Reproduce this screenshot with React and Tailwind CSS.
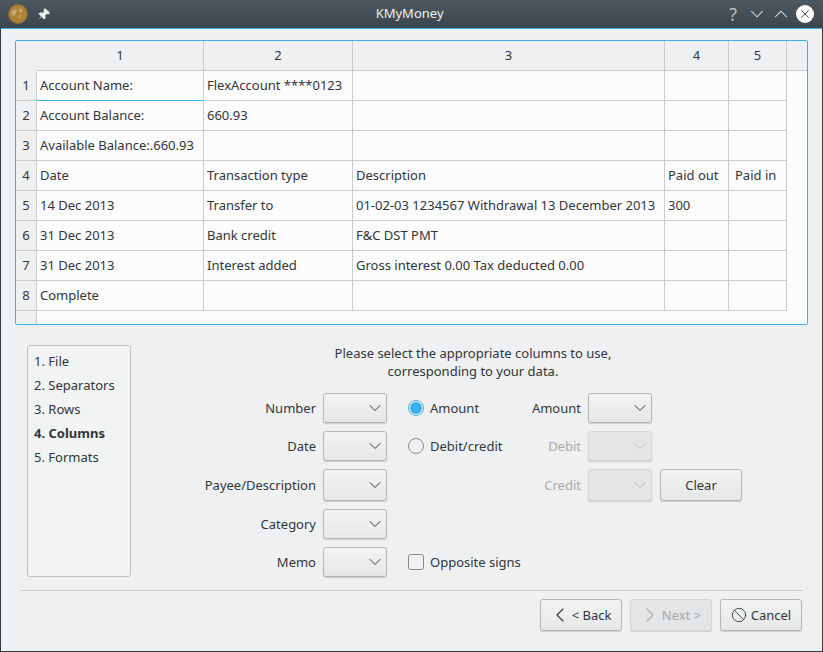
import React from 'react'
import { ChevronDown, ChevronUp, ChevronLeft, ChevronRight, Pin, Ban, X } from 'lucide-react'

const colWidths = ['w-[167px]', 'w-[149px]', 'w-[312px]', 'w-[64px]', 'w-[58px]']
const rows = [
    ['Account Name:', 'FlexAccount ****0123', '', '', ''],
    ['Account Balance:', '660.93', '', '', ''],
    ['Available Balance:.660.93', '', '', '', ''],
    ['Date', 'Transaction type', 'Description', 'Paid out', 'Paid in'],
    ['14 Dec 2013', 'Transfer to', '01-02-03 1234567 Withdrawal 13 December 2013', '300', ''],
    ['31 Dec 2013', 'Bank credit', 'F&C DST PMT', '', ''],
    ['31 Dec 2013', 'Interest added', 'Gross interest 0.00 Tax deducted 0.00', '', ''],
    ['Complete', '', '', '', ''],
]

const Combo = ({ disabled, tall }) => (
    <div className={`w-[64px] ${tall ? 'h-[32px]' : 'h-[30px]'} rounded-[3px] border flex items-center justify-end pr-[1px] shadow-[0_1px_1px_rgba(0,0,0,0.15)] ${disabled ? 'border-[#d4d6d7] bg-[#e3e5e6] text-[#b4b6b7]' : 'border-[#b4b6b7] bg-gradient-to-b from-[#f2f3f3] to-[#e6e8e8] text-[#31363b]'}`}>
        <ChevronDown size={20} strokeWidth={1.2} />
    </div>
)

const Button = ({ children, disabled, className = '' }) => (
    <div className={`w-[82px] h-[32px] rounded-[3px] border flex items-center justify-center shadow-[0_1px_1px_rgba(0,0,0,0.15)] ${disabled ? 'border-[#d4d6d7] bg-[#e3e5e6] text-[#a6a8a9]' : 'border-[#b4b6b7] bg-gradient-to-b from-[#f2f3f3] to-[#e6e8e8] text-[#31363b]'} ${className}`}>
        {children}
    </div>
)

const Label = ({ children, disabled }) => (
    <div className={`text-right pr-[7px] pt-[1px] ${disabled ? 'text-[#a6a8a9]' : ''}`}>{children}</div>
)

const Radio = ({ checked, children }) => (
    <div className="flex items-center gap-[6px]">
        <div className={`w-[16px] h-[16px] rounded-full border flex items-center justify-center ${checked ? 'border-[#3daee9]' : 'border-[#8a8c8e]'}`}>
            {checked && <div className="w-[12px] h-[12px] rounded-full bg-[#3daee9]"></div>}
        </div>
        <span className="pt-[1px]">{children}</span>
    </div>
)

const App = () => {
    return (
        <div className="w-[823px] h-[652px] bg-[#2f3a42] flex flex-col overflow-hidden text-[13px] text-[#31363b] font-['Noto_Sans',sans-serif]">
            <div className="h-[28px] shrink-0 bg-gradient-to-b from-[#4d5860] to-[#3a454d] flex items-center pl-[8px] pr-[9px] text-[#eff0f1]">
                <svg width="20" height="20" viewBox="0 0 20 20">
                    <circle cx="10" cy="10" r="9.5" fill="#b08238" />
                    <circle cx="10" cy="10" r="9.5" fill="none" stroke="#8a6a32" strokeWidth="0.6" />
                    <path d="M3 8 L7 5 L9 7 L7 11 L5 12 Z M11 4 L15 6 L13 9 L11 7 Z M10 12 L13 11 L12 15 Z" fill="#c9a86e" />
                </svg>
                <Pin size={13} className="ml-[9px] rotate-45 fill-[#eff0f1]" strokeWidth={1.5} />
                <div className="flex-1 text-center pl-[40px]">KMyMoney</div>
                <span className="text-[18px] leading-none text-[#b9bdc0] mr-[8px]">?</span>
                <ChevronDown size={22} strokeWidth={1.1} className="mx-[1px]" />
                <ChevronUp size={22} strokeWidth={1.1} className="mx-[1px]" />
                <div className="w-[18px] h-[18px] ml-[3px] rounded-full bg-white flex items-center justify-center">
                    <X size={14} strokeWidth={1.5} className="text-[#31363b]" />
                </div>
            </div>

            <div className="flex-1 mx-[1px] mb-[1px] bg-[#eff0f1] border-t border-[#3daee9] flex flex-col pt-[11px] min-h-0">
                <div className="mx-[14px] h-[285px] w-[793px] border border-[#3daee9] rounded-[2px] bg-[#fcfcfc] shrink-0 overflow-hidden flex flex-col">
                    <div className="flex h-[30px] shrink-0 bg-[#eff0f1]">
                        <div className="w-[21px] shrink-0"></div>
                        <div className="flex flex-1 border-b border-[#c9cbcc]">
                            {colWidths.map((w, i) => (
                                <div key={i} className={`${w} shrink-0 border-r border-[#c9cbcc] flex items-center justify-center`}>{i + 1}</div>
                            ))}
                        </div>
                    </div>
                    {rows.map((row, r) => (
                        <div key={r} className="flex h-[30px] shrink-0">
                            <div className="w-[21px] shrink-0 flex items-center justify-center bg-[#eff0f1] border-b border-r border-[#c9cbcc]">{r + 1}</div>
                            {row.map((cell, c) => (
                                <div key={c} className={`${colWidths[c]} shrink-0 border-r border-b flex items-center whitespace-nowrap ${r === 0 && c === 0 ? 'border-b-[#3daee9]' : 'border-b-[#c9cbcc]'} border-r-[#c9cbcc] ${r === 3 && c === 4 ? 'pl-[6px]' : 'pl-[3px]'}`}>{cell}</div>
                            ))}
                        </div>
                    ))}
                    <div className="flex-1 w-[21px] bg-[#eff0f1] border-r border-[#c9cbcc]"></div>
                </div>

                <div className="flex-1 flex pl-[26px] pt-[20px] min-h-0">
                    <div className="w-[104px] h-[232px] shrink-0 border border-[#bcbebf] rounded-[3px] bg-[#f2f3f3] pl-[6px] pt-[3px] leading-[24px]">
                        <div>1. File</div>
                        <div>2. Separators</div>
                        <div>3. Rows</div>
                        <div className="font-bold">4. Columns</div>
                        <div>5. Formats</div>
                    </div>

                    <div className="flex-1 flex flex-col">
                        <div className="text-center leading-[18px] w-[684px] -mt-[1px]">
                            Please select the appropriate columns to use,<br />corresponding to your data.
                        </div>
                        <div className="grid grid-cols-[192px_64px_21px_180px_64px_8px_82px] grid-rows-[30px_30px_32px_30px_30px] gap-y-[8px] items-center mt-[13px]">
                            <Label>Number</Label>
                            <Combo />
                            <div></div>
                            <div className="flex items-center justify-between"><Radio checked>Amount</Radio><Label>Amount</Label></div>
                            <Combo />
                            <div></div>
                            <div></div>

                            <Label>Date</Label>
                            <Combo />
                            <div></div>
                            <div className="flex items-center justify-between"><Radio>Debit/credit</Radio><Label disabled>Debit</Label></div>
                            <Combo disabled />
                            <div></div>
                            <div></div>

                            <Label>Payee/Description</Label>
                            <Combo tall />
                            <div></div>
                            <Label disabled>Credit</Label>
                            <Combo disabled tall />
                            <div></div>
                            <Button><span className="pt-[1px]">Clear</span></Button>

                            <Label>Category</Label>
                            <Combo />
                            <div className="col-span-5"></div>

                            <Label>Memo</Label>
                            <Combo />
                            <div></div>
                            <div className="col-span-4 flex items-center gap-[6px]">
                                <div className="w-[16px] h-[16px] rounded-[3px] border border-[#8a8c8e]"></div>
                                <span className="pt-[1px]">Opposite signs</span>
                            </div>
                        </div>
                    </div>
                </div>

                <div className="mx-[19px] border-t border-[#c9cbcc] mb-[8px] shrink-0"></div>
                <div className="flex justify-end gap-[8px] pr-[20px] pb-[20px] shrink-0">
                    <Button className="pr-[3px]"><ChevronLeft size={24} strokeWidth={1.1} /><span className="pt-[1px]">&lt; Back</span></Button>
                    <Button disabled className="pr-[3px]"><ChevronRight size={24} strokeWidth={1.1} /><span className="pt-[1px]">Next &gt;</span></Button>
                    <Button className="gap-[4px]"><Ban size={16} strokeWidth={1.3} /><span className="pt-[1px]">Cancel</span></Button>
                </div>
            </div>
        </div>
    )
}

export default App
